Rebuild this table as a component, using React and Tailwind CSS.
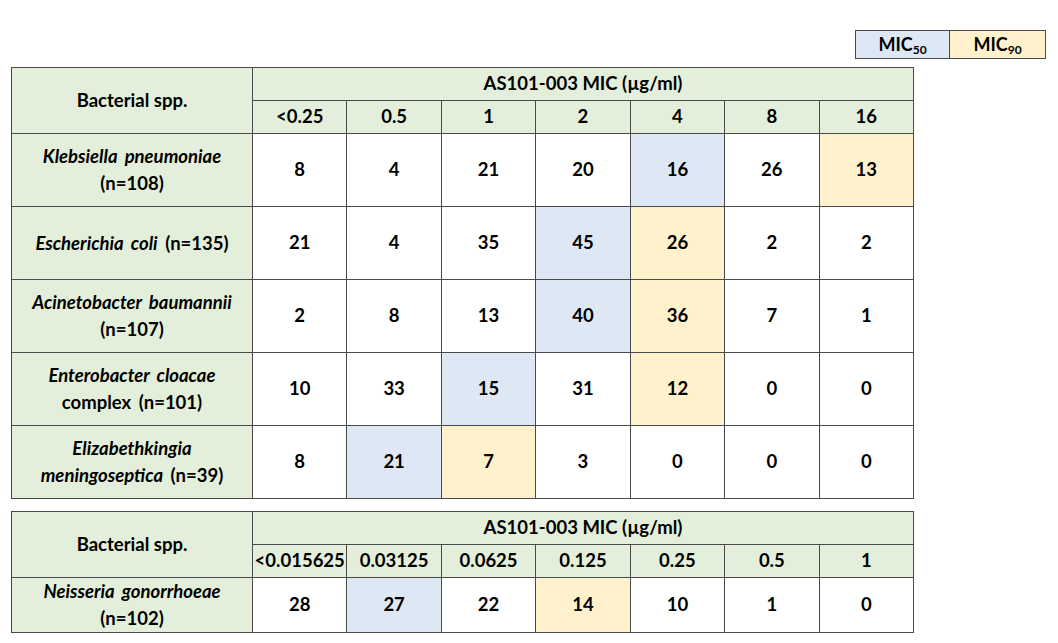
import React from 'react'

const BLUE = 'bg-[#dde8f4]'
const YEL = 'bg-[#fff1cc]'
const GREEN = 'bg-[#e3efdb]'

const table1 = {
  cols: ['<0.25', '0.5', '1', '2', '4', '8', '16'],
  rows: [
    { name: <><i>Klebsiella pneumoniae</i><br />(n=108)</>, vals: [8, 4, 21, 20, 16, 26, 13], m50: 4, m90: 6 },
    { name: <><i>Escherichia coli</i> (n=135)</>, vals: [21, 4, 35, 45, 26, 2, 2], m50: 3, m90: 4 },
    { name: <><i>Acinetobacter baumannii</i><br />(n=107)</>, vals: [2, 8, 13, 40, 36, 7, 1], m50: 3, m90: 4 },
    { name: <><i>Enterobacter cloacae</i><br />complex (n=101)</>, vals: [10, 33, 15, 31, 12, 0, 0], m50: 2, m90: 4 },
    { name: <><i>Elizabethkingia</i><br /><i>meningoseptica</i> (n=39)</>, vals: [8, 21, 7, 3, 0, 0, 0], m50: 1, m90: 2 },
  ],
  rowH: 'h-[73px]',
}

const table2 = {
  cols: ['<0.015625', '0.03125', '0.0625', '0.125', '0.25', '0.5', '1'],
  rows: [
    { name: <><i>Neisseria gonorrhoeae</i><br />(n=102)</>, vals: [28, 27, 22, 14, 10, 1, 0], m50: 1, m90: 3 },
  ],
  rowH: 'h-[52px]',
}

const MicTable = ({ data, className }) => {
  const cell = 'border border-[#4a4a4a] text-center p-0'
  return (
    <table className={['border-collapse table-fixed w-[903px]', className].join(' ')}>
      <colgroup>
        <col className="w-[241px]" />
        {data.cols.map((c) => <col key={c} />)}
      </colgroup>
      <thead>
        <tr className="h-[33px]">
          <th rowSpan={2} className={[cell, GREEN, 'font-bold'].join(' ')}>Bacterial spp.</th>
          <th colSpan={7} className={[cell, GREEN].join(' ')}>AS101-003 MIC (µg/ml)</th>
        </tr>
        <tr className="h-[33px]">
          {data.cols.map((c) => (
            <th key={c} className={[cell, GREEN, 'whitespace-nowrap overflow-hidden'].join(' ')}>{c}</th>
          ))}
        </tr>
      </thead>
      <tbody>
        {data.rows.map((r, i) => (
          <tr key={i} className={data.rowH}>
            <td className={[cell, GREEN, 'leading-[27px] [word-spacing:3px]'].join(' ')}>{r.name}</td>
            {r.vals.map((v, j) => (
              <td key={j} className={[cell, j === r.m50 ? BLUE : j === r.m90 ? YEL : 'bg-white'].join(' ')}>{v}</td>
            ))}
          </tr>
        ))}
      </tbody>
    </table>
  )
}

export default function App() {
  return (
    <div className="w-[1058px] h-[643px] bg-white text-black font-bold text-[18.5px] font-['Lato','Liberation_Sans',sans-serif] relative">
      <div className="pt-[30px] flex justify-end pr-[12px]">
        <div className="flex border border-[#4a4a4a] h-[29px] text-[18px]">
          <div className={['w-[94px] flex items-center justify-center border-r border-[#4a4a4a]', BLUE].join(' ')}>
            <span>MIC<sub className="text-[12px]">50</sub></span>
          </div>
          <div className={['w-[95px] flex items-center justify-center', YEL].join(' ')}>
            <span>MIC<sub className="text-[12px]">90</sub></span>
          </div>
        </div>
      </div>
      <div className="pl-[11px] pt-[8px]">
        <MicTable data={table1} />
        <MicTable data={table2} className="mt-[12px]" />
      </div>
    </div>
  )
}
